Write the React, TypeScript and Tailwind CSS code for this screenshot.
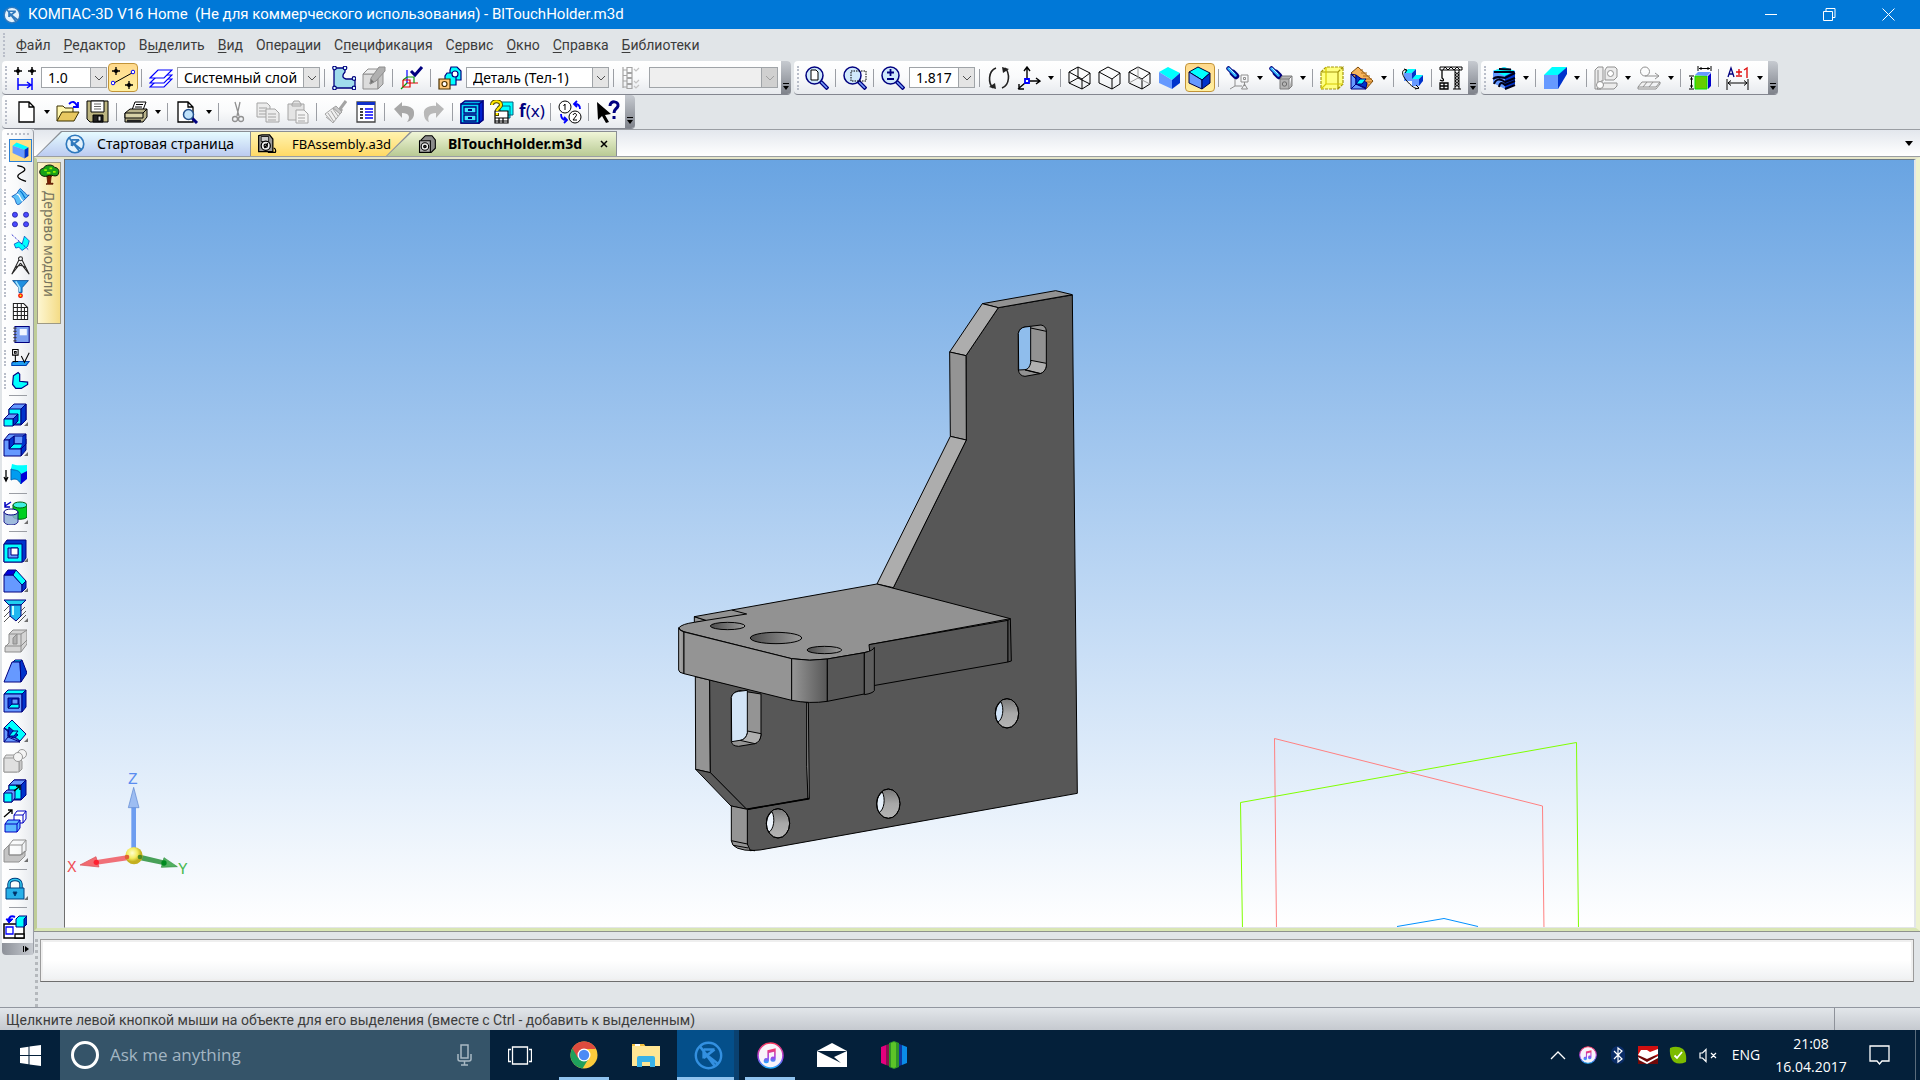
import type { ReactNode } from 'react';

const NAVY = '#00007f';
const CYAN = '#00ffff';
const BLUE = '#6699ff';
const DEEP = '#0033cc';

/** KOMPAS round logo, shared by the title bar, the start tab and the taskbar. */
function Logo({ size, dark = false }: { size: number; dark?: boolean }) {
    const ring = dark ? '#3390e0' : '#2f79bd';
    return (
        <svg width={size} height={size} viewBox="0 0 24 24" fill="none" aria-hidden="true">
            <circle cx="12" cy="12" r="10.5" fill={dark ? 'none' : '#e4f2fc'} stroke={ring} strokeWidth="2" />
            <path d="M8 7v7.500M8 14l9-7M5 4.500 17.500 21M11 12l9 7M8 7h9" stroke={ring} strokeWidth="2.200" />
        </svg>
    );
}

/* Shared pieces of the box shaped icons */
const wire = <path d="M10 1 22 7v11l-8 5L1 17V6zM1 6l13 7 8-6M14 13v10" fill="none" stroke="#000" />;
const solid = (stroke: string) => (
    <g stroke={stroke} strokeLinejoin="round">
        <path d="M10 1 22 7l-8 7L1 6z" fill={CYAN} />
        <path d="M1 6l13 8v9L1 17z" fill={BLUE} />
        <path d="M14 14l8-7v10l-8 6z" fill={DEEP} />
    </g>
);
const lens = (
    <g>
        <path d="m15 15 8 8" stroke={NAVY} strokeWidth="4" />
        <path d="m16 16 6 6" stroke="#7aa2ff" strokeWidth="1.500" />
        <circle cx="9.500" cy="9.500" r="8.500" fill="#cfe8fb" stroke={NAVY} strokeWidth="1.500" />
    </g>
);
const torch = (
    <g strokeLinecap="round">
        <path d="m2.500 2.500 5 5" stroke={NAVY} strokeWidth="4.500" />
        <path d="m7 7 3 3" stroke={NAVY} strokeWidth="6.500" />
        <path d="m2.500 2.500 7 7" stroke="#35b6ff" strokeWidth="2.500" />
        <path d="m3.500 2.500 5 5" stroke="#c0f0ff" strokeWidth="1" />
    </g>
);

const ICONS: Record<string, ReactNode> = {
    step: (
        <g fill="none">
            <path d="M5 1v8M1 5h8M19 1v8M15 5h8" stroke="#000" strokeWidth="1.500" />
            <circle cx="5" cy="5" r="2" fill="#000" />
            <circle cx="19" cy="5" r="2" fill="#000" />
            <path d="M5 12v12M19 12v12M5 19h13M14 16l4 3-4 3" stroke="#0000ff" strokeWidth="1.500" />
        </g>
    ),
    snap: (
        <g fill="none">
            <path d="M5 1v8M1 5h8M18 15v8M14 19h8" stroke="#000" strokeWidth="1.300" />
            <circle cx="5" cy="5" r="2" fill="#000" />
            <circle cx="18" cy="19" r="2" fill="#000" />
            <path d="M3 17 21 7" stroke="#000" />
            <circle cx="2" cy="17" r="1.800" fill="#fff" stroke="#0000ff" />
            <circle cx="22" cy="6" r="1.800" fill="#fff" stroke="#0000ff" />
        </g>
    ),
    layers: (
        <g fill="#fff" stroke="#0000ff" strokeWidth="1.200">
            <path d="M1 21 9 13h14l-8 8z" />
            <path d="M1 17 9 9h14l-8 8z" />
            <path d="M1 12 9 4h14l-8 8z" />
        </g>
    ),
    sketch: (
        <g stroke={NAVY}>
            <path d="M2 2h11v4c-3 3-3 6 1 7h9v9H2z" fill="#a0dcec" strokeWidth="1.300" />
            <g fill="#dff" strokeWidth="1.200">
                <circle cx="2.500" cy="2" r="1.800" />
                <circle cx="13" cy="2" r="1.800" />
                <circle cx="22" cy="12.500" r="1.800" />
                <circle cx="2.500" cy="22" r="1.800" />
                <circle cx="22" cy="22" r="1.800" />
            </g>
        </g>
    ),
    editBody: (
        <g stroke="#8e8e8e" fill="#dcdcdc">
            <path d="M1 8h15v15H1z" />
            <path d="m1 8 5-5h15l-5 5z" fill="#ececec" />
            <path d="m16 8 5-5v15l-5 5z" fill="#c4c4c4" />
            <path d="m8 18 1-6 8-11h6v4l-9 10z" fill="#b0b0b0" />
            <path d="m8 18 1-5 3 3z" fill="#707070" />
        </g>
    ),
    axisCheck: (
        <g fill="none" strokeWidth="1.200">
            <path d="M7 4v13" stroke="#0000ff" />
            <path d="M7 17h11" stroke="#e00000" />
            <path d="M7 17 1 23M3 14l4-3h7v6" stroke="#0a9a0a" />
            <path d="M3 14v7M3 14h7v7H3" stroke="#e00000" />
            <path d="m11 5 4 4 7-8" stroke={NAVY} strokeWidth="3" />
        </g>
    ),
    bodies: (
        <g stroke={NAVY} strokeWidth="1.200">
            <path d="M13 1h6l4 4v9H12V4z" fill={CYAN} />
            <path d="M9 7h5l4 3v9H7v-9z" fill={CYAN} />
            <circle cx="17" cy="8" r="3" fill="#fff" />
            <path d="M1 13h11v10H1z" fill="#ffc878" stroke="#4a3000" />
            <circle cx="6.500" cy="18" r="2.500" fill="#fff" stroke="#4a3000" />
        </g>
    ),
    tree: (
        <g fill="none" stroke="#a4a4a4" strokeWidth="1.200">
            <path d="M2 1v21M2 4h4M2 9.500h4M2 15h4M2 21h4M6 1.500h5v5H6zM6 7.500h5v4H6zM6 12.500h5v5H6zM6 18.500h5v4H6z" />
            <path d="m13 3 2 2 3-3M13 15l2 2 3-3M13 20l2 2 3-3" stroke="#c4c4c4" />
        </g>
    ),
    zoomAll: <g>{lens}<path d="M6 4h5l2 2v8H6z" fill="#fff" stroke="#000" /></g>,
    zoomFrame: <g>{lens}<path d="M8 5h15v10H8z" fill="none" stroke="#000" strokeDasharray="1.500 1" /></g>,
    zoomScale: <g>{lens}<path d="M9.500 3v7M6 6.500h7M6 13h7" stroke={NAVY} strokeWidth="1.800" /></g>,
    rotate: (
        <g fill="none" stroke="#222" strokeWidth="1.600">
            <path d="M9 2C1 5 1 17 6 22M15 22c8-3 8-15 3-20" />
            <path d="M2 21l7 2-1-6zM22 3l-7-2 1 6z" fill="#222" stroke="none" />
        </g>
    ),
    axes: (
        <g fill="none" stroke="#000">
            <path d="M10 13V2M12 15h11M8 17l-7 6M7 5l3-4 3 4M19 12l4 3-4 3M2 18v5h5" strokeWidth="1.400" />
            <path d="M8 13h4v4H8z" fill="#fff" stroke="#0000ff" strokeWidth="1.800" />
        </g>
    ),
    cubeWire: <g>{wire}<path d="M10 1v11M10 12 1 17M10 12l12 6" fill="none" stroke="#000" /></g>,
    cubeNoHidden: wire,
    cubeThin: <g>{wire}<path d="M10 1v11M10 12 1 17M10 12l12 6" fill="none" stroke="#9a9a9a" /></g>,
    cubeShade: solid('none'),
    cubeShadeWire: solid('#000040'),
    light: (
        <g>
            {torch}
            <path d="M15 9h7v7h-7zM17.500 11.500h2v2h-2zM9 13v7M9 20h7M4 23l5-3M18.500 16v4M18.500 18l-3 5h6z" fill="none" stroke="#8e8e8e" />
        </g>
    ),
    section: (
        <g>
            {torch}
            <path d="M11 13h9v10h-9zM11 13l2-3h10l-3 3M23 10v10l-3 3" fill="#b4b4b4" stroke="#7c7c7c" />
            <circle cx="15.500" cy="18" r="2.200" fill="none" stroke="#6c6c6c" />
        </g>
    ),
    yellowBox: (
        <g fill="#ffff80" stroke="#a4960a" strokeWidth="1.200">
            <path d="M1 6h17v17H1zM1 6l5-5h17l-5 5zM18 6l5-5v17l-5 5z" strokeDasharray="3 1" />
            <path d="M6 1v17h17M6 18l-5 5" fill="none" stroke="#d6ca00" />
        </g>
    ),
    cut3d: (
        <g stroke={NAVY}>
            <path d="M1 7 8 1l15 14-7 8z" fill="#f6b45c" stroke="#7a4a08" />
            <path d="M10 4h3M11 7h6M13 10h7M15 13h7M16 16h6M16 19h3" stroke="#b06a18" />
            <path d="M1 8v15h15z" fill={BLUE} />
            <path d="m1 8 5 1v9l10 5M6 18l-5 5" fill="none" />
            <path d="M6 9v9l10 4 1-5z" fill={DEEP} />
            <path d="m6 18 4-5h6l-4 5z" fill={CYAN} />
        </g>
    ),
    rebuild: (
        <g>
            <path d="M3 7h8v8H3z" fill={BLUE} />
            <path d="m3 7 4-4h8l-4 4z" fill={CYAN} />
            <path d="m11 7 4-4v6l-4 5z" fill={DEEP} />
            <path d="M11 13h7v7h-7z" fill={BLUE} />
            <path d="m11 13 4-4h7l-4 4z" fill={CYAN} />
            <path d="m18 13 4-4v6l-4 5z" fill={DEEP} />
            <path d="M5 4C1 3 0 8 5 14s10 10 13 8M3 3l3 1-2 3M15 19l3 3-4 1" fill="none" stroke="#000" />
        </g>
    ),
    crane: (
        <g fill="none" stroke="#000">
            <path d="M1 1h22v3H1zM4 4l2-3 3 3 3-3 3 3 3-3 3 3M16 4v19M20 4v19M16 6l4 3-4 3 4 3-4 3 4 3M20 6l-4 3 4 3-4 3 4 3-4 3M14 23h8" />
            <path d="M3 4v8c3 2 1 4-2 2M1 17h8v6H1zM5 17v6M1 20h8" strokeWidth="1.300" />
        </g>
    ),
    zebra: (
        <g>
            <path d="M12 1 23 5v13l-10 5L1 17V5z" fill={BLUE} />
            <path d="M12 1 23 5l-10 5L1 5z" fill={CYAN} />
            <path d="m13 10 10-5v13l-10 5z" fill={DEEP} />
            <path d="m7 3 12 .5M2 6h20M1 13c3-3 7-2 12-1l10-5M2 18c2-6 7-5 11-2l10-4M7 21c1-6 4-4 6-2l10-4M13 23l10-4" fill="none" stroke="#000018" strokeWidth="2" />
        </g>
    ),
    prism: (
        <g>
            <path d="M1 9 9 1h15l-8 8z" fill={CYAN} />
            <path d="M1 9h14v14H1z" fill={BLUE} />
            <path d="m15 9 9-8v7l-9 15z" fill={DEEP} />
        </g>
    ),
    check1: (
        <g fill="#ececec" stroke="#909090">
            <path d="m1 4 3-3h5v14H7v8H1zM4 4v14" />
            <path d="M10 17h13v3l-3 3H3l4-4zM11 4l2-3h8l2 2v8l-3 3h-9z" />
            <circle cx="16.500" cy="7.500" r="3" fill="#fff" />
            <circle cx="6" cy="19" r="3.500" fill="#fff" />
        </g>
    ),
    check2: (
        <g fill="#f0f0f0" stroke="#909090">
            <circle cx="8" cy="5.500" r="4.500" fill="none" />
            <path d="M8 10h14M18 7l4 3-4 3" fill="none" />
            <path d="M5 16h18l-4 5H1zM1 21v2h18l4-5v-2M10 16l-4 5M16 16l-4 5" />
        </g>
    ),
    measureBox: (
        <g>
            <path d="M7 10h12v13H7z" fill="#66cc00" stroke="#00e000" />
            <path d="m7 9 3-3h13l-4 4z" fill={BLUE} />
            <path d="m20 10 3-3v13l-3 3z" fill="#0000cc" />
            <path d="M10 0v5M23 0v5M11 2.500h11M13 1v3M20 1v3M1 10h5M1 23h5M3.500 11v11M2 13h3M2 20h3" stroke="#000" fill="none" />
        </g>
    ),
    tolerance: (
        <g fill="none">
            <path d="M2 11 5 2l3 9M3 8h4" stroke={NAVY} strokeWidth="1.300" />
            <path d="M10 6h6M13 3v6M10 10h6M18 4l3-2v10" stroke="#e01010" strokeWidth="1.400" />
            <path d="M1 13v11M22 13v11M2 17h19M5 14.500 2 17l3 2.500M18 14.500l3 2.500-3 2.500" stroke="#000" />
        </g>
    ),
    newDoc: <path d="M6 2h10l5 5v15H6zM16 2v5h5" fill="#fff" stroke="#000" strokeWidth="1.300" />,
    open: (
        <g stroke="#3b3000">
            <path d="M1 21V6h6l2 2h8v4" fill="#fff7b0" />
            <path d="m1 21 5-9h17l-5 9z" fill="#e8c860" />
            <path d="M13 4c3-3 6-3 8 2M22 2v5h-5" fill="none" stroke="#0000ff" strokeWidth="1.800" />
        </g>
    ),
    save: (
        <g stroke="#000">
            <path d="M1 1h21v21H4l-3-3z" fill="#bdb580" />
            <path d="M5 1h13v11H5z" fill="#fff" />
            <path d="M8 4h7M8 6.500h7M8 9h7" stroke="#666" />
            <path d="M7 15h10v7H7z" fill="#222" />
            <path d="M12 16h3v5h-3z" fill="#ddd" />
        </g>
    ),
    print: (
        <g stroke="#000">
            <path d="M8 10 11 2h11l-3 8z" fill="#fff" />
            <path d="M12 4.500h7M11 7h7" />
            <path d="m1 13 5-4h17v8l-4 5H1z" fill="#b8b28a" />
            <path d="M1 13h18v5H1zM19 13l4-4" fill="#d8d2a8" />
            <path d="M3 21h14" stroke="#222" strokeWidth="2.500" />
        </g>
    ),
    preview: (
        <g>
            <path d="M3 2h10l5 5v15H3zM13 2v5h5" fill="#fff" stroke="#000" strokeWidth="1.300" />
            <path d="m17 18 5 5" stroke={NAVY} strokeWidth="3" />
            <circle cx="13.500" cy="14.500" r="5" fill="#bfe2fb" stroke="#24508c" strokeWidth="1.500" />
        </g>
    ),
    cut: (
        <g fill="none" stroke="#909090" strokeWidth="1.300">
            <path d="m9 2 4 14M14 2l-3 14" />
            <circle cx="9" cy="19" r="2.500" />
            <circle cx="15" cy="19" r="2.500" />
        </g>
    ),
    copy: (
        <g fill="#ececec" stroke="#a4a4a4">
            <path d="M1 3h10l3 3v11H1zM3 8h8M3 11h8M3 14h8" />
            <path d="M10 9h9l4 4v9H10zM12 14h8M12 17h8M12 20h8" />
        </g>
    ),
    paste: (
        <g fill="#e4e4e4" stroke="#a4a4a4">
            <path d="M2 4h16v16H2zM6 4l2-3h5l2 3v2H6z" />
            <path d="M10 10h8l4 4v9H10zM12 15h7M12 18h7M12 21h7" fill="#f4f4f4" />
        </g>
    ),
    brush: (
        <g fill="#f0f0f0" stroke="#a4a4a4">
            <path d="M16 9 22 1M15 8l3 3" strokeWidth="3" />
            <path d="m12 6 6 6-2 2-7-6z" fill="#c8c8c8" />
            <path d="M9 8 1 14l8 9 7-9zM4 13l6 9M7 11l5 8M9 9l5 7M2 17l5 4" />
        </g>
    ),
    props: (
        <g>
            <path d="M3 2h18v20H3z" fill="#fff" stroke="#444" strokeWidth="1.300" />
            <path d="M3 2h18v3H3z" fill="#1030c8" />
            <path d="M6 9h3M6 12h3M6 15h3M6 18h3" stroke="#000" strokeWidth="1.300" />
            <path d="M11 9h8M11 12h8M11 15h8M11 18h8" stroke="#0000ff" strokeWidth="1.300" />
        </g>
    ),
    undo: <path d="M2 9 10 2v4c8-1 13 3 12 8 0 4-3 7-7 8 4-5 2-9-5-9v5z" fill="#a8a8a8" />,
    redo: <path d="m22 9-8-7v4C6 5 1 9 2 14c0 4 2 7 5 8-2-5 0-9 7-9v5z" fill="#b8b8b8" />,
    cabinet: (
        <g stroke={NAVY} strokeWidth="1.300">
            <path d="m1 4 4-3h18v19l-4 3H1z" fill="#00b4e8" />
            <path d="m19 4 4-3v19l-4 3z" fill="#0020d0" />
            <path d="M1 4h18v19H1z" fill="#00d8f8" />
            <path d="M4 7h12v6H4zM4 15h12v6H4z" fill="#40e8ff" />
            <path d="M8 10h4M8 18h4" strokeWidth="2" />
        </g>
    ),
    library: (
        <g>
            <path d="M10 2h13v13H10zM8 6h12v12H8z" fill={CYAN} stroke="#006080" />
            <path d="M5 11h13v12H5zM5 18h13M5 21h13M9 18v5M13 18v5" fill="#fff" stroke="#000" strokeWidth="1.200" />
            <path d="M2 5c0-5 9-5 9 0 0 3-4 3-4 6M7 13v3" fill="none" stroke="#4a4000" strokeWidth="4" />
            <path d="M2 5c0-5 9-5 9 0 0 3-4 3-4 6M7 13v2" fill="none" stroke="#ffe800" strokeWidth="2.200" />
        </g>
    ),
    renumber: (
        <g fill="#fff" stroke="#000">
            <circle cx="7" cy="7" r="6" />
            <circle cx="17" cy="17" r="6" />
            <path d="m5.500 6 1.500-2v6M15 15c1-3 5-1 3 1l-3 4h4" fill="none" />
            <path d="M22 9c0-4-2-5-5-5M19 1l-3 3 3 3M3 14c0 4 1 6 5 6M6 17l3 3-3 3" fill="none" stroke="#0000ff" strokeWidth="1.800" />
        </g>
    ),
    whatsThis: (
        <g>
            <path d="m1 2 1 18 4-4 4 7 3-1-4-7 6-1z" fill="#000" />
            <path d="M14 6c0-6 9-5 8 0-1 3-4 3-4 7M18 16v3" fill="none" stroke={NAVY} strokeWidth="3" />
        </g>
    ),
    // small section switches of the left panel
    body: (
        <g>
            <path d="m2 6 5-4 15 6-5 3z" fill={CYAN} />
            <path d="M2 6l15 5v11L2 15z" fill={BLUE} />
            <path d="m17 11 5-3v11l-5 3z" fill={DEEP} />
        </g>
    ),
    spline: <path d="M8 2c8 1 14 5 5 9-9 5-3 8 6 11" fill="none" stroke="#000" strokeWidth="1.600" />,
    surface: (
        <g stroke="#0048b0">
            <path d="m1 12 5-3c3-1 3-6 6-7l4 4c3 1 3 6 7 4l-7 7c-3 2-5 6-8 5-3-2-1-7-7-10z" fill="#5cc0f8" />
            <path d="M7 9c5 0 3 5 8 9" fill="none" stroke="#fff" strokeWidth="1.500" />
            <path d="M11 5c4 1 3 5 7 9" fill="none" stroke="#0070d0" strokeWidth="1.500" />
        </g>
    ),
    array: (
        <g fill="#4a4aff" stroke="#1c1ca0">
            <circle cx="5" cy="6" r="3.200" />
            <circle cx="19" cy="6" r="3.200" />
            <circle cx="5" cy="18" r="3.200" />
            <circle cx="19" cy="18" r="3.200" />
        </g>
    ),
    plane: (
        <g stroke="#0048c0">
            <path d="m4 14 6-3 4 3 3-10 6 6-2 7-7 5-4-4-4 1z" fill={CYAN} />
            <path d="m1 2 22 20" fill="none" stroke="#0000c0" strokeDasharray="3 2" />
        </g>
    ),
    dividers: (
        <g fill="none" stroke="#222" strokeWidth="1.300">
            <circle cx="12" cy="3.500" r="2.500" />
            <path d="M10 5 1 23l11-14M14 5l9 18L12 9M5 15c4-4 10-4 14 0" />
        </g>
    ),
    filter: (
        <g>
            <path d="M2 2h20l-8 9v6h-4v-6z" fill="#2090e0" stroke="#004890" />
            <path d="m6 3 5 8v5" fill="none" stroke="#a8e8ff" strokeWidth="2" />
            <circle cx="12" cy="21" r="2.200" fill="#ffe800" stroke="#f00000" strokeWidth="1.600" />
        </g>
    ),
    table: <path d="M3 2h13l5 5v15H3zM3 7h18M3 12h18M3 17h18M8 2v20M13 2v20M17 7v15" fill="#fff" stroke="#222" strokeWidth="1.300" />,
    book: (
        <g>
            <path d="M5 2h18v20H5z" fill="#7ca0f0" stroke={NAVY} strokeWidth="1.300" />
            <path d="M11 5h9v8h-9z" fill="#f0f6ff" />
            <path d="M3 4h4M3 8h4M3 12h4M3 16h4M3 20h4" stroke="#444" strokeWidth="1.500" />
        </g>
    ),
    datum: (
        <g fill="none" stroke="#000" strokeWidth="1.300">
            <path d="m1 19 3-2h19l-4 5H1z" fill="#20a0f0" stroke="#0040b0" />
            <path d="M2 2h7v7H2zM4.500 4.500h2v2h-2zM5.500 9v9M2 17h7M13 10l4 8 6-12" />
        </g>
    ),
    sheet: <path d="M3 6 9 2l2 2v9l10 1v3l-8 5H6l-4-5z" fill={CYAN} stroke={NAVY} strokeWidth="1.500" />,
    // modelling commands
    extrude: (
        <g stroke={NAVY}>
            <path d="m6 6 5-5h12v16l-5 5H6z" fill={BLUE} />
            <path d="M6 6h12v15H6z" fill={CYAN} />
            <path d="m18 6 5-5v16l-5 5z" fill={DEEP} />
            <path d="m1 16 5-5h9l-5 5z" fill={BLUE} />
            <path d="m10 16 5-5v7l-5 5z" fill={DEEP} />
            <path d="M1 16h9v7H1z" fill={CYAN} />
        </g>
    ),
    cutExtrude: (
        <g stroke={NAVY}>
            <path d="m1 7 5-6h17l-5 6z" fill={BLUE} />
            <path d="m18 12 5-6v11l-5 6z" fill={DEEP} />
            <path d="M11 3h9v8h-9z" fill={BLUE} />
            <path d="M11 3v8l-5 5V7z" fill={DEEP} />
            <path d="m6 16 5-5h10l-4 5z" fill={CYAN} />
            <path d="M1 7h5v9h12v7H1z" fill={BLUE} />
            <path d="M20 3l3-2v10l-5 5" fill={DEEP} />
        </g>
    ),
    thicken: (
        <g>
            <path d="M9 1c5 2 9 1 15 1v8l-7 1C14 7 12 8 8 6z" fill={CYAN} />
            <path d="M8 6c4 2 7 0 10 5v10c-3-5-6-6-10-4z" fill="#009cf0" stroke="#0060b0" />
            <path d="m18 11 6-3v8l-6 5z" fill="#0000d8" />
            <path d="M3 7v10M1 14l2 4 2-4" fill="none" stroke="#000" strokeWidth="1.300" />
        </g>
    ),
    boolean: (
        <g>
            <path d="M10 4v12c2 3 12 3 14 0V4z" fill="#00d020" stroke="#006010" />
            <ellipse cx="17" cy="4" rx="7" ry="3" fill="#40f0e0" stroke="#006010" />
            <path d="M1 11v10c2 4 12 4 14 0V11z" fill="#90b0d8" stroke={NAVY} opacity=".85" />
            <ellipse cx="8" cy="11" rx="7" ry="3" fill="#fff" stroke={NAVY} />
            <path d="M8 1 2 5M2 1v5h5" fill="none" stroke="#0000c0" strokeWidth="1.500" />
        </g>
    ),
    hole: (
        <g stroke={NAVY}>
            <path d="m1 5 3-4h19v18l-3 4H1z" fill={DEEP} />
            <path d="M1 5h18v18H1z" fill={CYAN} />
            <path d="M5 9h10v10H5z" fill={BLUE} />
            <path d="M8 9h7v7H8z" fill="#fff" />
        </g>
    ),
    chamfer: (
        <g stroke={NAVY}>
            <path d="M1 6h9l9 10v7H1z" fill={BLUE} />
            <path d="m1 6 4-5h8l-3 5z" fill="#0000e0" />
            <path d="m10 6 3-5 10 11-4 4z" fill={CYAN} />
            <path d="m19 16 4-4v7l-4 4z" fill={DEEP} />
        </g>
    ),
    drill: (
        <g>
            <path d="m1 12 5-5M1 18l6-6M1 23l7-7M16 14l6-6M16 19l7-7M15 24l8-8" stroke="#555" />
            <path d="M1 1h22l-5 5H6z" fill="#20d0f0" stroke={NAVY} />
            <path d="M7 6h11v11l-5 5-6-5z" fill="#20b8f0" stroke={NAVY} />
            <path d="M10 7v9" stroke="#c0ffff" strokeWidth="2" />
        </g>
    ),
    rib: (
        <g stroke="#8c8c8c" fill="#d4d4d4">
            <path d="m6 5 4-4h14v14l-6 8H2v-5l4-4z" />
            <path d="M6 5h12v12H2M18 5l6-4M18 17v6M18 17l6-6" fill="none" />
            <path d="M10 15V9l4-4v10z" fill="#b0b0b0" />
        </g>
    ),
    draft: (
        <g stroke={NAVY}>
            <path d="m10 3 2-2h7l-2 2z" fill={CYAN} />
            <path d="M9 3h8l1 20H1z" fill={BLUE} />
            <path d="m17 3 2-2 5 13-6 9z" fill={DEEP} />
        </g>
    ),
    shell: (
        <g stroke={NAVY}>
            <path d="m1 5 4-4h18l-4 4z" fill={CYAN} />
            <path d="M1 5h18v18H1z" fill={BLUE} />
            <path d="m19 5 4-4v17l-4 5z" fill={DEEP} />
            <path d="M5 9h11v10H5z" fill={DEEP} />
            <path d="m5 19 4-4h7v4z" fill={CYAN} />
            <path d="M9 10h6v5H9z" fill={BLUE} />
        </g>
    ),
    sectionBody: (
        <g stroke={NAVY}>
            <path d="m1 9 8-8 14 14-6 7z" fill={CYAN} />
            <path d="M1 9v14h16z" fill={BLUE} />
            <path d="m1 9 4 2v7l12 5M5 18l-4 5" fill="none" />
            <path d="m5 17 1-9 9 8-4 3z" fill={DEEP} />
            <path d="m6 17 4-5h5l-4 5z" fill={CYAN} />
        </g>
    ),
    cutSolid: (
        <g stroke="#989898" fill="#e0e0e0">
            <path d="m16 9 3 3v8l-3 3z" fill="#c8c8c8" />
            <path d="m1 9 2-3h11v17H1z" />
            <path d="M1 9h15v14H1z" />
            <circle cx="19" cy="5" r="4.500" fill="#f4f4f4" />
            <circle cx="15" cy="8" r="4.500" fill="#f4f4f4" />
        </g>
    ),
    scale: (
        <g stroke={NAVY}>
            <path d="m6 6 5-5h12v15l-5 5H6z" fill={DEEP} />
            <path d="M6 6h12v14H6z" fill={CYAN} />
            <path d="m6 6 5-5h12l-5 5z" fill={BLUE} />
            <path d="m1 14 3-3h8v8l-3 4H1z" fill={BLUE} />
            <path d="M1 14h8v9H1z" fill={CYAN} />
            <path d="m11 12 5-4M13 7h4v4" fill="none" stroke="#000" strokeWidth="1.500" />
        </g>
    ),
    move: (
        <g stroke="#0000c0">
            <path d="m11 6 3-4h9v8l-3 4h-9zM11 6h9v8M20 6l3-4" fill="#fff" />
            <path d="m2 15 3-4h12v8l-3 4H2z" fill="#5cb8ff" />
            <path d="M2 15h12v8M14 15l3-4" fill="none" />
            <path d="m1 8 8-7M5 1h4v4" fill="none" stroke="#000" strokeWidth="1.300" />
        </g>
    ),
    sheetGray: (
        <g stroke="#909090" fill="#c4c4c4">
            <path d="m1 11 5-5v10h11l5-4v5l-6 6H1z" />
            <path d="m6 6 4-5h13v11l-5 4H6zM6 6h13v10M19 6l4-5" fill="none" />
        </g>
    ),
    lock: (
        <g stroke="#004080">
            <path d="M6 11V7c0-6 12-6 12 0v4" fill="none" strokeWidth="3.500" />
            <path d="M6 11V7c0-6 12-6 12 0v4" fill="none" stroke="#30c8f0" strokeWidth="1.500" />
            <path d="M3 11h18v11H3z" fill="#28b0e8" />
            <path d="M10 15h4l-2 4z" fill="#002850" />
        </g>
    ),
    drawing: (
        <g stroke="#000">
            <path d="M1 9h20v14H1z" fill="#fff" strokeWidth="1.500" />
            <path d="M3 12h7v7H3z" fill="#fff" stroke="#0000ff" strokeWidth="1.300" />
            <path d="M12 19h9v4h-9z" fill="#fff" strokeWidth="1.300" />
            <path d="M13 4 16 1h8v8l-3 3h-8z" fill={CYAN} stroke={NAVY} />
            <path d="m21 4 3-3v8l-3 3z" fill={DEEP} stroke={NAVY} />
            <path d="M12 2C8 0 6 2 6 5" fill="none" stroke="#0000ff" strokeWidth="2" />
            <path d="M3 4l3 4 4-4z" fill="#0000ff" stroke="#0000ff" />
        </g>
    ),
    part: (
        <g stroke="#000" strokeWidth="1.300">
            <path d="m5 7 5-5h8l4 5v10l-5 5H5z" fill="#8a8a8a" />
            <path d="M3 8h13v14H3z" fill="#b0b0b0" />
            <circle cx="9.500" cy="15" r="4.500" fill="#f0f0f0" />
            <circle cx="9.500" cy="15" r="1.500" fill="#333" />
        </g>
    ),
    assembly: (
        <g stroke="#000" strokeWidth="1.500">
            <path d="m2 2 4-1h9l4 5v15H2z" fill="#9a9a9a" />
            <path d="M5 3h9v6H5z" fill="#ccc" strokeWidth="1" />
            <circle cx="10.500" cy="14" r="5.500" fill="#f0f0f0" />
            <circle cx="10.500" cy="14" r="2" fill="#fff" />
            <path d="m9 17 4-6M20 17c2 0 3 3 2 5h-9" fill="none" />
        </g>
    ),
    treeColor: (
        <g>
            <path d="M9 13h5l-1 9h3v1H8l2-1zM5 11l6 5M18 11l-6 5" fill="#7c2000" stroke="#5a1800" />
            <path d="M3 13C-1 10 1 5 5 5c2-5 11-5 13-1 5 0 6 6 3 9-4 2-5-1-9 0-4 1-6 2-9 0z" fill="#18a018" stroke="#000" />
            <path d="M6 7h3M12 5h3M16 9h3M9 10h4" stroke="#90f000" strokeWidth="2" />
        </g>
    ),
};

function Icon({ name, size = 24 }: { name: string; size?: number }) {
    return (
        <svg width={size} height={size} viewBox="0 0 24 24" fill="none" className="shrink-0" aria-hidden="true">
            {ICONS[name]}
        </svg>
    );
}

type Item =
    | { kind: 'btn'; icon: string; label: string; active?: boolean; menu?: boolean }
    | { kind: 'sep' }
    | { kind: 'combo'; label: string; value: string; width: string; disabled?: boolean };

const btn = (icon: string, label: string, menu = false, active = false): Item => ({ kind: 'btn', icon, label, menu, active });
const sep: Item = { kind: 'sep' };
const combo = (label: string, value: string, width: string, disabled = false): Item => ({ kind: 'combo', label, value, width, disabled });

const STATE_BAR: Item[] = [
    btn('step', 'Текущий шаг курсора'), combo('Шаг курсора', '1.0', 'w-[66px]'), btn('snap', 'Привязки', false, true), sep,
    btn('layers', 'Слои'), combo('Текущий слой', 'Системный слой', 'w-[143px]'), sep,
    btn('sketch', 'Эскиз'), btn('editBody', 'Редактировать'), sep,
    btn('axisCheck', 'Локальная система координат'), sep,
    btn('bodies', 'Тела'), combo('Текущее тело', 'Деталь (Тел-1)', 'w-[143px]'), sep,
    btn('tree', 'Состав'), combo('Исполнение', '', 'w-[129px]', true),
];

const VIEW_BAR: Item[] = [
    btn('zoomAll', 'Показать все'), sep,
    btn('zoomFrame', 'Увеличить рамкой'), sep,
    btn('zoomScale', 'Масштаб'), combo('Текущий масштаб', '1.817', 'w-[66px]'), sep,
    btn('rotate', 'Повернуть'), btn('axes', 'Ориентация', true), sep,
    btn('cubeWire', 'Каркас'), btn('cubeNoHidden', 'Без невидимых линий'), btn('cubeThin', 'Невидимые линии тонкие'),
    btn('cubeShade', 'Полутоновое'), btn('cubeShadeWire', 'Полутоновое с каркасом', false, true), sep,
    btn('light', 'Скрыть объекты', true), btn('section', 'Скрыть компоненты', true), sep,
    btn('yellowBox', 'Габарит'), btn('cut3d', 'Сечение модели', true), sep,
    btn('rebuild', 'Перестроить'), sep, btn('crane', 'Режим построения'),
];

const CHECK_BAR: Item[] = [
    btn('zebra', 'Зебра', true), sep, btn('prism', 'Проверка', true), sep,
    btn('check1', 'Проверка пересечений', true), btn('check2', 'Развертка', true), sep,
    btn('measureBox', 'Размеры'), sep, btn('tolerance', 'Допуски', true),
];

const FILE_BAR: Item[] = [
    btn('newDoc', 'Создать', true), btn('open', 'Открыть'), btn('save', 'Сохранить'), sep,
    btn('print', 'Печать', true), sep, btn('preview', 'Просмотр', true), sep,
    btn('cut', 'Вырезать'), btn('copy', 'Копировать'), btn('paste', 'Вставить'), sep,
    btn('brush', 'Копировать свойства'), btn('props', 'Свойства'), sep,
    btn('undo', 'Отменить'), btn('redo', 'Повторить'), sep,
    btn('cabinet', 'Менеджер библиотек'), btn('library', 'Библиотека'), btn('fx', 'Переменные'), sep,
    btn('renumber', 'Нумерация'), sep, btn('whatsThis', 'Что это?'),
];

function Combo({ label, value, width, disabled }: { label: string; value: string; width: string; disabled?: boolean }) {
    return (
        <div className={`relative mx-px h-[21px] ${width}`}>
            <select
                aria-label={label}
                disabled={disabled}
                className="h-full w-full appearance-none border border-[#a0a4a8] bg-white pl-1.5 text-sm leading-[19px] text-black disabled:bg-[#efefef]"
            >
                <option>{value}</option>
            </select>
            <span
                className={`pointer-events-none absolute inset-y-px right-px flex w-4 items-center justify-center border-l border-[#a0a4a8] ${disabled ? 'bg-[#d0d0d0]' : 'bg-[#e4e4e4]'}`}
            >
                <svg width="10" height="6" viewBox="0 0 10 6" fill="none" stroke={disabled ? '#a0a0a0' : '#505050'} aria-hidden="true">
                    <path d="m1 1 4 4 4-4" />
                </svg>
            </span>
        </div>
    );
}

function Grip() {
    return <span className="mx-[3px] h-6 border-l-2 border-dotted border-[#b9bec9]" />;
}

function DropArrow() {
    return <span className="h-0 w-0 border-x-[3px] border-t-4 border-x-transparent border-t-black" />;
}

function Toolbar({ items, label }: { items: Item[]; label: string }) {
    return (
        <div
            role="toolbar"
            aria-label={label}
            className="flex h-[34px] items-center overflow-hidden rounded border-b border-[#83868f] bg-gradient-to-b from-white via-[#f9fafb] to-[#e7eaee]"
        >
            <Grip />
            {items.map((item, i) => {
                if (item.kind === 'sep') return <span key={i} className="mr-1 ml-[3px] h-[18px] w-px bg-[#9b9ea4]" />;
                if (item.kind === 'combo') return <Combo key={i} {...item} />;
                return (
                    <div key={i} className="flex h-full items-center">
                        <button
                            type="button"
                            aria-label={item.label}
                            className={`flex h-[29px] w-[30px] items-center justify-center ${item.active ? 'rounded-sm border border-[#c29438] bg-gradient-to-b from-[#ffd98c] to-[#fff0a0]' : ''}`}
                        >
                            {item.icon === 'fx' ? (
                                <span className="text-[17px] text-[#00007f]">
                                    <b>f</b>(x)
                                </span>
                            ) : (
                                <Icon name={item.icon} />
                            )}
                        </button>
                        {item.menu && (
                            <button type="button" aria-label={`${item.label}: список`} className="flex h-full w-[13px] items-center justify-center">
                                <DropArrow />
                            </button>
                        )}
                    </div>
                );
            })}
            <button type="button" aria-label="Параметры панели" className="ml-0.5 flex h-full w-2.5 flex-col items-center justify-end gap-0.5 bg-gradient-to-b from-[#c6cad0] to-[#7f838b] pb-1">
                <span className="h-px w-1.5 bg-black" />
                <DropArrow />
            </button>
        </div>
    );
}

const MENU: [string, string, string][] = [
    ['', 'Ф', 'айл'],
    ['', 'Р', 'едактор'],
    ['В', 'ы', 'делить'],
    ['', 'В', 'ид'],
    ['Опера', 'ц', 'ии'],
    ['С', 'п', 'ецификация'],
    ['С', 'е', 'рвис'],
    ['', 'О', 'кно'],
    ['', 'С', 'правка'],
    ['', 'Б', 'иблиотеки'],
];

function TitleBar() {
    return (
        <header className="flex h-[29px] items-center bg-[#0078d7] pl-[3px] text-white">
            <Logo size={18} />
            <h1 className="ml-[7px] flex-1 font-['Roboto','Open_Sans',sans-serif] text-[15px] whitespace-pre">
                {'КОМПАС-3D V16 Home  (Не для коммерческого использования) - BlTouchHolder.m3d'}
            </h1>
            <div className="flex h-full">
                <button type="button" aria-label="Свернуть" className="flex w-[58px] items-center justify-center">
                    <span className="h-px w-3 bg-white" />
                </button>
                <button type="button" aria-label="Восстановить" className="flex w-[58px] items-center justify-center">
                    <svg width="13" height="13" viewBox="0 0 13 13" fill="none" stroke="#fff" aria-hidden="true">
                        <path d="M.5 3.500h9v9h-9zM3 3.500v-3h9v9H9.500" />
                    </svg>
                </button>
                <button type="button" aria-label="Закрыть" className="flex w-[60px] items-center justify-center">
                    <svg width="13" height="13" viewBox="0 0 13 13" stroke="#fff" aria-hidden="true">
                        <path d="m.5.5 12 12M12.500.5l-12 12" />
                    </svg>
                </button>
                <span className="w-0.5" />
            </div>
        </header>
    );
}

function MenuBar() {
    return (
        <nav className="flex h-8 items-center">
            <Grip />
            <div className="ml-2 flex gap-[13px] font-['Roboto','Noto_Sans',sans-serif] text-sm text-[#3c3c3c]">
                {MENU.map(([before, key, after]) => (
                    <button type="button" key={before + key + after}>
                        {before}
                        <u className="underline-offset-2">{key}</u>
                        {after}
                    </button>
                ))}
            </div>
        </nav>
    );
}

const SWITCHES: [string, string][] = [
    ['body', 'Редактирование детали'], ['spline', 'Пространственные кривые'], ['surface', 'Поверхности'], ['array', 'Массивы'],
    ['plane', 'Вспомогательная геометрия'], ['dividers', 'Измерения'], ['filter', 'Фильтры'], ['table', 'Спецификация'],
    ['book', 'Отчеты'], ['datum', 'Элементы оформления'], ['sheet', 'Листовое тело'],
];

// null is a separator, the third value marks a button with an extended command list
const COMMANDS: ([string, string, boolean] | null)[] = [
    null, ['extrude', 'Операция выдавливания', true], ['cutExtrude', 'Вырезать выдавливанием', true], ['thicken', 'Придать толщину', false],
    null, ['boolean', 'Булева операция', true],
    null, ['hole', 'Отверстие', true], ['chamfer', 'Фаска', true], ['drill', 'Отверстие из библиотеки', true], ['rib', 'Ребро жесткости', false],
    ['draft', 'Уклон', false], ['shell', 'Оболочка', false], ['sectionBody', 'Сечение', true], ['cutSolid', 'Вычесть', false],
    ['scale', 'Масштабирование', false], ['move', 'Переместить', false], ['sheetGray', 'Листовой элемент', true],
    null, ['lock', 'Зафиксировать', true],
    null, ['drawing', 'Новый чертеж', false],
];

function SidePanel() {
    return (
        <aside className="flex w-8 flex-col self-start overflow-hidden rounded border-r border-[#9a9ea6] bg-gradient-to-r from-white via-[#f9fafb] to-[#e7eaee]">
            <span className="mx-auto mt-1 mb-1 h-0 w-[22px] border-t-2 border-dotted border-[#b9bec9]" />
            {SWITCHES.map(([icon, label], i) => (
                <div key={icon} className="flex h-[23px] items-center">
                    <span className="mr-[3px] ml-0.5 h-4 border-l-2 border-dotted border-[#b9bec9]" />
                    <button
                        type="button"
                        aria-label={label}
                        className={`flex h-[23px] w-[23px] items-center justify-center ${i === 0 ? 'border border-[#2a7fd4] bg-[#ffe08a]' : ''}`}
                    >
                        <Icon name={icon} size={19} />
                    </button>
                </div>
            ))}
            {COMMANDS.map((c, i) =>
                c === null ? (
                    <span key={i} className="mx-auto mt-[3px] mb-1 h-px w-[18px] bg-[#9b9ea4]" />
                ) : (
                    <button type="button" key={i} aria-label={c[1]} className="relative flex h-[30px] w-[30px] items-center pl-px">
                        <Icon name={c[0]} />
                        {c[2] && <span className="absolute right-1 bottom-1 h-0 w-0 border-b-4 border-l-4 border-b-[#6e6e6e] border-l-transparent" />}
                    </button>
                ),
            )}
            <button type="button" aria-label="Параметры панели" className="mt-px flex h-3 items-center justify-end bg-gradient-to-r from-[#8d9199] to-[#c6cad0] pr-1">
                <span className="mr-px h-1.5 w-px bg-black" />
                <span className="h-0 w-0 border-y-[3px] border-l-4 border-y-transparent border-l-black" />
            </button>
        </aside>
    );
}

function DocumentTabs() {
    return (
        <div className="flex h-7 border-t border-b border-[#9a9ea3] bg-gradient-to-b from-[#e3e7ed] to-white text-sm" role="tablist">
            <button type="button" role="tab" aria-selected="false" className="mt-px ml-0.5 w-[215px] bg-[#8a8e94] pt-px [clip-path:polygon(25px_0,100%_0,100%_100%,0_100%)]">
                <span className="mr-px ml-px flex h-full items-center bg-gradient-to-b from-[#e6fbff] to-[#bccbf0] pl-7 [clip-path:polygon(25px_0,100%_0,100%_100%,0_100%)]">
                    <Logo size={20} />
                    <span className="ml-3">Стартовая страница</span>
                </span>
            </button>
            <button type="button" role="tab" aria-selected="false" className="mt-px w-40 bg-[#8a8e94] pt-px [clip-path:polygon(0_0,100%_0,calc(100%_-_25px)_100%,0_100%)]">
                <span className="flex h-full items-center bg-gradient-to-b from-[#fff3ae] to-[#ffd964] pl-1.5">
                    <Icon name="assembly" size={20} />
                    <span className="ml-[15px] text-[13px]">FBAssembly.a3d</span>
                </span>
            </button>
            <div className="mt-px -ml-[25px] w-[231px] bg-[#8a8e94] pt-px [clip-path:polygon(25px_0,100%_0,100%_100%,0_100%)]">
                <div className="mr-px ml-px flex h-full items-center bg-gradient-to-b from-[#f0f6d8] to-[#b9ca94] pl-[30px] [clip-path:polygon(25px_0,100%_0,100%_100%,0_100%)]">
                    <Icon name="part" size={20} />
                    <button type="button" role="tab" aria-selected="true" className="ml-[11px] w-[138px] text-left font-bold">
                        BlTouchHolder.m3d
                    </button>
                    <button type="button" aria-label="Закрыть вкладку" className="ml-3.5">
                        <svg width="8" height="8" viewBox="0 0 8 8" stroke="#000" strokeWidth="1.500" aria-hidden="true">
                            <path d="m1 1 6 6M7 1 1 7" />
                        </svg>
                    </button>
                </div>
            </div>
            <button type="button" aria-label="Список документов" className="mr-[7px] ml-auto flex items-center">
                <span className="h-0 w-0 border-x-4 border-t-[5px] border-x-transparent border-t-black" />
            </button>
        </div>
    );
}

/** Round through hole of the bracket; the sliver on the left shows the background. */
function ThroughHole({ cx, cy, sky }: { cx: number; cy: number; sky: string }) {
    return (
        <g transform={`translate(${cx} ${cy})`}>
            <ellipse rx="35" ry="44" fill="url(#bore)" />
            <path d="M-18-35C-8-15-12 18-28 27-38 10-38-20-18-35z" fill={sky} />
            <ellipse rx="35" ry="44" fill="none" />
        </g>
    );
}

function Model() {
    return (
        <g transform="translate(660 560) scale(.33333)" stroke="#000" strokeWidth="3" strokeLinejoin="round">
            {/* upright plate */}
            <path d="M1015-757 1237-795 1246 120 1252 700 300 870 270 872 262 860V748L445 716 440 400 700 83 919-360 918-613z" fill="#575757" />
            <path d="M967-769 1187-808 1237-796 1015-757z" fill="#929292" />
            <path d="M967-769 1015-757 918-613 869-624z" fill="#adadad" />
            <path d="M869-624 918-613 919-360 871-371z" fill="#949494" />
            <path d="M871-371 919-360 700 83 651 72z" fill="#adadad" />
            {/* upper slot */}
            <g transform="translate(600 -870)">
                <path d="M475 190Q479 173 495 171L543 165Q558 168 559 183V288Q556 306 540 311L495 319Q478 318 475 300z" fill="#929292" />
                <path d="M512 271 559 280V288Q556 306 540 311L495 300Q509 292 512 278z" fill="#b0b0b0" />
                <path d="M475 190Q479 173 495 171L512 169V278Q508 298 495 299L476 300z" fill="#8fbdec" />
                <path d="M512 174 559 184M495 299 540 310" fill="none" />
            </g>
            {/* lower left plate */}
            <path d="M106 350 149 360 151 638 107 628z" fill="#949494" />
            <path d="M149 360 444 428V716L260 748 151 638z" fill="#575757" />
            <path d="M107 628 151 638 260 748 213 738z" fill="#5b5b5b" />
            <path d="M440 428V620L444 716 448 716 445 428z" fill="#888" />
            <path d="M260 748 448 716" strokeWidth="5" />
            <path d="M214 738 262 748V852L270 870 285 872Q215 872 214 842z" fill="#949494" />
            <path d="M214 842 262 852M220 856 265 864" fill="none" />
            {/* lower slot */}
            <path d="M214 412Q218 395 240 392L303 402V525Q301 545 285 551L236 559Q216 558 214 545z" fill="#949494" />
            <path d="M262 513 303 521V525Q301 545 285 551L240 541Q258 538 262 518z" fill="#b0b0b0" />
            <path d="M214 412Q218 396 236 394L262 391V518Q258 538 240 541L215 545z" fill="#d3e5f7" />
            {/* shelf */}
            <path d="M103 170V188L140 182z" fill="#949494" />
            <path d="M57 203Q66 192 103 187L138 181 103 170 215 150 651 72 1051 176 627 254 643 262Q641 272 612 278L502 297Q450 305 395 296L72 215Q57 210 57 203z" fill="#929292" />
            <path d="M138 181 260 162 215 150" fill="none" />
            <path d="M627 254 1044 181V306L640 377z" fill="#575757" />
            <path d="M1044 181 1051 176 1054 303 1044 306z" fill="#505050" />
            <path d="M56 203Q57 212 72 216V341Q56 338 56 330z" fill="url(#edge)" />
            <path d="M72 216 395 296V421L72 341z" fill="#949494" />
            <path d="M395 296Q450 305 502 297V424Q450 432 395 421z" fill="url(#round)" />
            <path d="M502 297 613 278V402L502 424z" fill="#575757" />
            <path d="M613 278Q640 272 643 262V392Q638 400 613 404z" fill="#5e5e5e" />
            <ellipse cx="203" cy="198" rx="52" ry="11" fill="url(#pit)" />
            <ellipse cx="348" cy="234" rx="77" ry="17" fill="url(#pit)" />
            <ellipse cx="493" cy="270" rx="52" ry="11" fill="url(#pit)" />
            <ThroughHole cx={1041} cy={460} sky="#cfe2f6" />
            <ThroughHole cx={685} cy={731} sky="#e6f0fa" />
            <ThroughHole cx={354} cy={790} sky="#edf4fc" />
        </g>
    );
}

function AxisTriad() {
    return (
        <g>
            <g transform="translate(0 540) scale(.33333)">
                <path d="M394 925V800h14v125z" fill="#6d9df0" />
                <path d="M385 803 401 742 417 803z" fill="#9dbdf2" stroke="#5a85d0" strokeWidth="2" />
                <path d="M385 945 290 960v14l98-14z" fill="#f07078" />
                <path d="M240 975 288 950 297 981z" fill="#f26a70" stroke="#d85058" strokeWidth="2" />
                <circle cx="289" cy="967" r="8" fill="#ff2030" />
                <path d="M415 943 490 961v14l-77-16z" fill="#48a058" />
                <path d="M532 980 492 953 484 982z" fill="#50b060" stroke="#309040" strokeWidth="2" />
                <circle cx="492" cy="969" r="8" fill="#008a20" />
                <circle cx="402" cy="947" r="26" fill="url(#ball)" />
                <circle cx="381" cy="951" r="7" fill="#e06030" />
                <circle cx="420" cy="951" r="7" fill="#508a20" />
            </g>
            <g className="font-['Liberation_Mono',monospace] text-base">
                <text x="128" y="784" fill="#5a8cf0">Z</text>
                <text x="67" y="872" fill="#f05058">X</text>
                <text x="178" y="874" fill="#48b850">Y</text>
            </g>
        </g>
    );
}

function Viewport() {
    return (
        <main className="relative flex-1 overflow-hidden border-t border-r-2 border-b border-l border-t-[#6b7a88] border-r-[#e3e6e8] border-b-[#e3e6e8] border-l-[#6e6e6e] bg-gradient-to-b from-[#69a4e2] to-white">
            <svg className="absolute inset-0 h-full w-full" role="img" aria-label="Модель BlTouchHolder">
                <defs>
                    <linearGradient id="round">
                        <stop offset="0" stopColor="#969696" />
                        <stop offset="1" stopColor="#575757" />
                    </linearGradient>
                    <linearGradient id="edge">
                        <stop offset="0" stopColor="#b0b0b0" />
                        <stop offset="1" stopColor="#8c8c8c" />
                    </linearGradient>
                    <linearGradient id="pit">
                        <stop offset="0" stopColor="#4c4c4c" />
                        <stop offset="1" stopColor="#9c9c9c" />
                    </linearGradient>
                    <linearGradient id="bore" x2="0" y2="1">
                        <stop offset="0" stopColor="#777" />
                        <stop offset=".5" stopColor="#a8a8a8" />
                        <stop offset="1" stopColor="#b4b4b4" />
                    </linearGradient>
                    <radialGradient id="ball" cx=".4" cy=".35">
                        <stop offset="0" stopColor="#ffffd0" />
                        <stop offset=".6" stopColor="#f4ec60" />
                        <stop offset="1" stopColor="#c4b020" />
                    </radialGradient>
                </defs>
                <g transform="translate(-65 -160)">
                    <Model />
                    <AxisTriad />
                    {/* base planes */}
                    <g fill="none">
                        <path d="M1276.500 930 1274.500 738.500 1542.500 806 1544 930" stroke="#ff8080" />
                        <path d="M1242.500 930 1240.500 802.500 1576.500 742.500 1578.500 930" stroke="#80ff00" />
                        <path d="M1397 926.500 1444 918.500 1478 926.500" stroke="#0090ff" />
                    </g>
                </g>
            </svg>
        </main>
    );
}

function TreeTab() {
    return (
        <div className="w-[27px] bg-[#e1e5e8] pt-[3px]">
            <button
                type="button"
                className="flex h-[162px] w-6 flex-col items-center border border-[#9e9a84] bg-gradient-to-r from-[#fdf6d0] to-[#f4dc86] pt-px"
            >
                <Icon name="treeColor" size={21} />
                <span className="mt-1.5 text-sm whitespace-nowrap text-[#77745f] [writing-mode:vertical-rl]">Дерево модели</span>
            </button>
        </div>
    );
}

function ItunesIcon({ size }: { size: number }) {
    return (
        <svg width={size} height={size} viewBox="0 0 26 26" aria-hidden="true">
            <defs>
                <linearGradient id="note" x2="0" y2="1">
                    <stop offset="0" stopColor="#ff3b5c" />
                    <stop offset=".6" stopColor="#a040e8" />
                    <stop offset="1" stopColor="#20b0ff" />
                </linearGradient>
            </defs>
            <circle cx="13" cy="13" r="12" fill="#f8f4fa" stroke="url(#note)" strokeWidth="1.500" />
            <path d="M10 8l8-2v10.500a2.500 2.500 0 1 1-1.500-2.300V9.500L11.500 10.700V18a2.500 2.500 0 1 1-1.500-2.300z" fill="url(#note)" />
        </svg>
    );
}

const APPS: { label: string; open?: boolean; active?: boolean; icon: ReactNode }[] = [
    {
        label: 'Google Chrome',
        open: true,
        icon: (
            <svg width="28" height="28" viewBox="0 0 28 28" aria-hidden="true">
                <circle cx="14" cy="14" r="13.500" fill="#fbcb3c" />
                <path d="M14 14 2.300 7.200A13.500 13.500 0 0 0 12.500 27.400L19 17z" fill="#1fa05c" />
                <path d="M2.300 7.200A13.500 13.500 0 0 1 26 8H14L8 17z" fill="#dd4b3e" />
                <circle cx="14" cy="14" r="6.500" fill="#fff" />
                <circle cx="14" cy="14" r="5.200" fill="#4c8bf5" />
            </svg>
        ),
    },
    {
        label: 'Проводник',
        icon: (
            <svg width="28" height="24" viewBox="0 0 28 24" aria-hidden="true">
                <path d="M0 1h12l2 3H0z" fill="#f5c13d" />
                <path d="M0 3h28v20H0z" fill="#ffe694" />
                <path d="M3 1h5v2H3z" fill="#fff" />
                <path d="M5 24V15q0-2 2-2h14q2 0 2 2v9h-5v-5h-8v5z" fill="#39b2e8" />
            </svg>
        ),
    },
    { label: 'КОМПАС-3D', open: true, active: true, icon: <Logo size={29} dark /> },
    { label: 'iTunes', open: true, icon: <ItunesIcon size={27} /> },
    {
        label: 'Почта',
        icon: (
            <svg width="30" height="24" viewBox="0 0 30 24" aria-hidden="true">
                <path d="M0 8 15 0l15 8v16H0z" fill="#fff" />
                <path d="M0 8h30l-13 6 7 6L0 8z" fill="#04203a" />
            </svg>
        ),
    },
    {
        label: 'Музыка',
        icon: (
            <svg width="26" height="28" viewBox="0 0 26 28" aria-hidden="true">
                <path d="m0 6 5-2v20l-5-2z" fill="#e6007e" />
                <path d="m5 4 3-1v22l-3-1z" fill="#8a1050" />
                <path d="m8 2 5-2 5 2v24l-5 2-5-2z" fill="#2f9428" />
                <path d="m10 2 3-1 2 1v24l-2 1-3-1z" fill="#5cc428" />
                <path d="m18 3 3 1v20l-3 1z" fill="#1038a0" />
                <path d="m21 4 5 2v16l-5 2z" fill="#0a8ce8" />
            </svg>
        ),
    },
];

function Taskbar() {
    return (
        <footer className="flex h-[50px] bg-[#04203a] font-['Open_Sans','Noto_Sans',sans-serif] text-white">
            <button type="button" aria-label="Start" className="flex w-[60px] items-center justify-center">
                <svg width="21" height="21" viewBox="0 0 21 21" fill="#fff" aria-hidden="true">
                    <path d="m0 3 8.500-1.200V10H0zM9.500 1.600 21 0v10H9.500zM0 11h8.500v8.200L0 18zM9.500 11H21v10L9.500 19.400z" />
                </svg>
            </button>
            <label className="flex w-[430px] items-center bg-[#355469] pr-[18px] pl-[11px]">
                <span className="h-7 w-7 shrink-0 rounded-full border-[3px] border-white" />
                <input aria-label="Search" placeholder="Ask me anything" className="ml-[11px] min-w-0 flex-1 bg-transparent text-[17px] outline-none placeholder:text-[#a3b6c3]" />
                <svg width="15" height="22" viewBox="0 0 15 22" fill="none" stroke="#a9b9c4" strokeWidth="1.500" aria-hidden="true">
                    <path d="M4 1h7v13H4zM1 10v5q0 2 2 2h9q2 0 2-2v-5M7.500 17v4M4 21h7" />
                </svg>
            </label>
            <button type="button" aria-label="Task view" className="flex w-[63px] items-center justify-center pr-[3px]">
                <svg width="24" height="19" viewBox="0 0 24 19" fill="none" stroke="#fff" aria-hidden="true">
                    <path d="M4.500 1h15v17h-15zM3 3.500H.5v12H3M21 3.500h2.500v12H21" strokeWidth="1.300" />
                </svg>
            </button>
            {APPS.map(app => (
                <button
                    type="button"
                    key={app.label}
                    aria-label={app.label}
                    className={`relative flex w-[62px] items-center justify-center ${app.active ? 'border-r-[5px] border-[#0a4170] bg-[#044f8a] pl-[5px]' : ''}`}
                >
                    {app.icon}
                    {app.open && <span className={`absolute bottom-0 h-[3px] bg-[#8fc3ef] ${app.active ? 'inset-x-0' : 'inset-x-1.5'}`} />}
                </button>
            ))}
            <div className="ml-auto flex items-center">
                <button type="button" aria-label="Show hidden icons" className="flex w-[30px] justify-center">
                    <svg width="16" height="9" viewBox="0 0 16 9" fill="none" stroke="#fff" strokeWidth="1.300" aria-hidden="true">
                        <path d="m1 8 7-7 7 7" />
                    </svg>
                </button>
                <button type="button" aria-label="iTunes" className="flex w-[30px] justify-center"><ItunesIcon size={18} /></button>
                <button type="button" aria-label="Bluetooth" className="flex w-[30px] justify-center">
                    <svg width="16" height="18" viewBox="0 0 16 18" aria-hidden="true">
                        <rect width="14" height="18" x="1" rx="7" fill="#0a2c66" />
                        <path d="m4 5 8 8-4 3V2l4 3-8 8" fill="none" stroke="#fff" strokeWidth="1.200" />
                    </svg>
                </button>
                <button type="button" aria-label="Antivirus" className="flex w-[30px] justify-center">
                    <svg width="20" height="18" viewBox="0 0 20 18" aria-hidden="true">
                        <path d="M0 0h20v18H0z" fill="#d01010" />
                        <path d="M0 10h20v8H0z" fill="#700808" />
                        <path d="M3 4h6l3 2 8-3v5L9 13 0 9zM0 11l9 5 11-6v2L9 18l-8-4z" fill="#fff" />
                    </svg>
                </button>
                <button type="button" aria-label="Updates" className="flex w-[30px] justify-center">
                    <svg width="18" height="18" viewBox="0 0 18 18" aria-hidden="true">
                        <path d="M1 2Q8-1 14 3q4 4 3 13-7 3-12 0Q0 11 1 2z" fill="#7cbb00" />
                        <path d="m5.500 9.500 2.500 2.500 5-6" fill="none" stroke="#fff" strokeWidth="1.800" />
                    </svg>
                </button>
                <button type="button" aria-label="Volume muted" className="flex w-[30px] justify-center">
                    <svg width="19" height="15" viewBox="0 0 19 15" fill="none" stroke="#fff" strokeWidth="1.200" aria-hidden="true">
                        <path d="M1 5h2.500L7 1.500v12L3.500 10H1zM12 5l5 5M17 5l-5 5" />
                    </svg>
                </button>
                <button type="button" className="w-[46px] text-sm">ENG</button>
                <button type="button" className="flex w-[84px] flex-col items-center text-sm leading-[23px]">
                    <span>21:08</span>
                    <span>16.04.2017</span>
                </button>
                <button type="button" aria-label="Notifications" className="flex w-[52px] justify-center">
                    <svg width="21" height="20" viewBox="0 0 21 20" fill="none" stroke="#fff" strokeWidth="1.300" aria-hidden="true">
                        <path d="M1 1h19v15h-7l-2.500 3L8 16H1z" />
                    </svg>
                </button>
                <span className="h-[50px] w-[11px] border-r border-[#5a6c7c]" />
                <button type="button" aria-label="Show desktop" className="h-[50px] w-1" />
            </div>
        </footer>
    );
}

export default function App() {
    return (
        <div className="flex h-screen flex-col overflow-hidden bg-[#e1e5e8] font-['Noto_Sans',Tahoma,sans-serif] text-sm text-black">
            <TitleBar />
            <MenuBar />
            <div className="flex gap-[3px] pl-0.5">
                <Toolbar items={STATE_BAR} label="Текущее состояние" />
                <Toolbar items={VIEW_BAR} label="Вид" />
                <Toolbar items={CHECK_BAR} label="Диагностика" />
            </div>
            <div className="flex pl-0.5">
                <Toolbar items={FILE_BAR} label="Стандартная" />
            </div>

            <div className="flex min-h-0 flex-1 pl-0.5">
                <SidePanel />
                <div className="flex min-w-0 flex-1 flex-col">
                    <DocumentTabs />
                    {/* document frame */}
                    <div className="flex min-h-0 flex-1 border-t-2 border-r-4 border-b-[3px] border-l-[3px] border-t-[#e5e5c8] border-r-[#eef3cf] border-b-[#d9e6b4] border-l-[#bfcd98] bg-[#e1e5e8]">
                        <TreeTab />
                        <Viewport />
                    </div>
                    {/* property panel */}
                    <div className="flex border-t border-[#8e928e] pt-[7px] pr-1.5">
                        <span className="mr-0.5 ml-px h-[68px] border-l-[3px] border-dotted border-[#b4b8bc]" />
                        <section
                            aria-label="Панель свойств"
                            className="h-[43px] flex-1 border border-[#9b9b9b] border-b-[#6e6e6e] bg-gradient-to-b from-white via-white to-[#eef0f2] ring-2 ring-[#efefef] ring-inset"
                        />
                    </div>
                </div>
            </div>

            <div className="flex h-[23px] items-center border-t border-[#9297a0] bg-gradient-to-b from-[#e2e6ea] to-[#c5c9cf] text-[#3c3c3c]">
                <p className="flex-1 pt-px pl-1.5 font-['Roboto','Noto_Sans',sans-serif]">
                    Щелкните левой кнопкой мыши на объекте для его выделения (вместе с Ctrl - добавить к выделенным)
                </p>
                <span className="h-full w-[86px] border-l border-[#8e929a]" />
            </div>
            <Taskbar />
        </div>
    );
}
